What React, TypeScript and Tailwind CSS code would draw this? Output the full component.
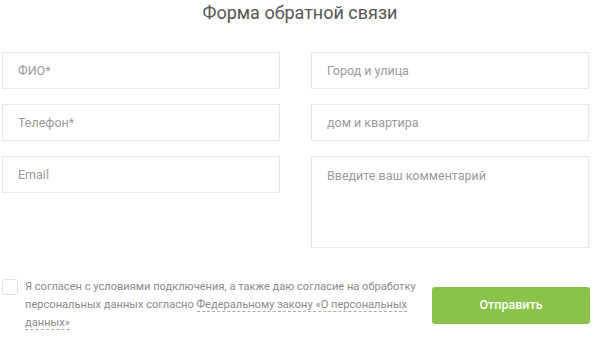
import React from 'react';

const fields = {
  left: ['ФИО*', 'Телефон*'],
  right: ['Город и улица', 'дом и квартира'],
};

function Field({ placeholder }: { placeholder: string }) {
  return (
    <input
      placeholder={placeholder}
      className="h-[37px] w-full border border-[#e6e6e6] bg-white px-[15px] text-[12.5px] text-[#555] placeholder:text-[#9a9a9a] outline-none"
    />
  );
}

export default function App() {
  return (
    <div className="w-[600px] h-[346px] bg-white overflow-hidden" style={{ fontFamily: 'Roboto, "Noto Sans", sans-serif' }}>
      <h2 className="text-center text-[18px] leading-[24px] text-[#555] pt-[1px]">Форма обратной связи</h2>

      <div className="grid grid-cols-[278px_278px] gap-x-[31px] gap-y-[15px] pl-[2px] mt-[27px]">
        <Field placeholder={fields.left[0]} />
        <Field placeholder={fields.right[0]} />
        <Field placeholder={fields.left[1]} />
        <Field placeholder={fields.right[1]} />
        <div className="self-start">
          <Field placeholder="Email" />
        </div>
        <textarea
          placeholder="Введите ваш комментарий"
          className="h-[92px] w-full resize-none border border-[#e6e6e6] bg-white px-[15px] py-[10px] text-[12.5px] leading-[17px] text-[#555] placeholder:text-[#9a9a9a] outline-none"
        />
      </div>

      <div className="flex items-start justify-between pl-[2px] pr-[10px] mt-[30px]">
        <label className="flex items-start gap-[7px]">
          <span className="mt-[1px] block h-[16px] w-[16px] shrink-0 rounded-[3px] border border-[#e0e0e0] bg-white" />
          <span className="w-[400px] text-[11.1px] leading-[18px] text-[#8a8a8a]">
            Я согласен с условиями подключения, а также даю согласие на обработку персональных данных согласно{' '}
            <a className="border-b border-dashed border-[#aaa] text-[#8a8a8a]">Федеральному закону «О персональных данных»</a>
          </span>
        </label>
        <button className="mt-[9px] h-[37px] w-[158px] rounded-[3px] bg-[#8bc34a] text-[12.5px] font-medium text-white">
          Отправить
        </button>
      </div>
    </div>
  );
}
